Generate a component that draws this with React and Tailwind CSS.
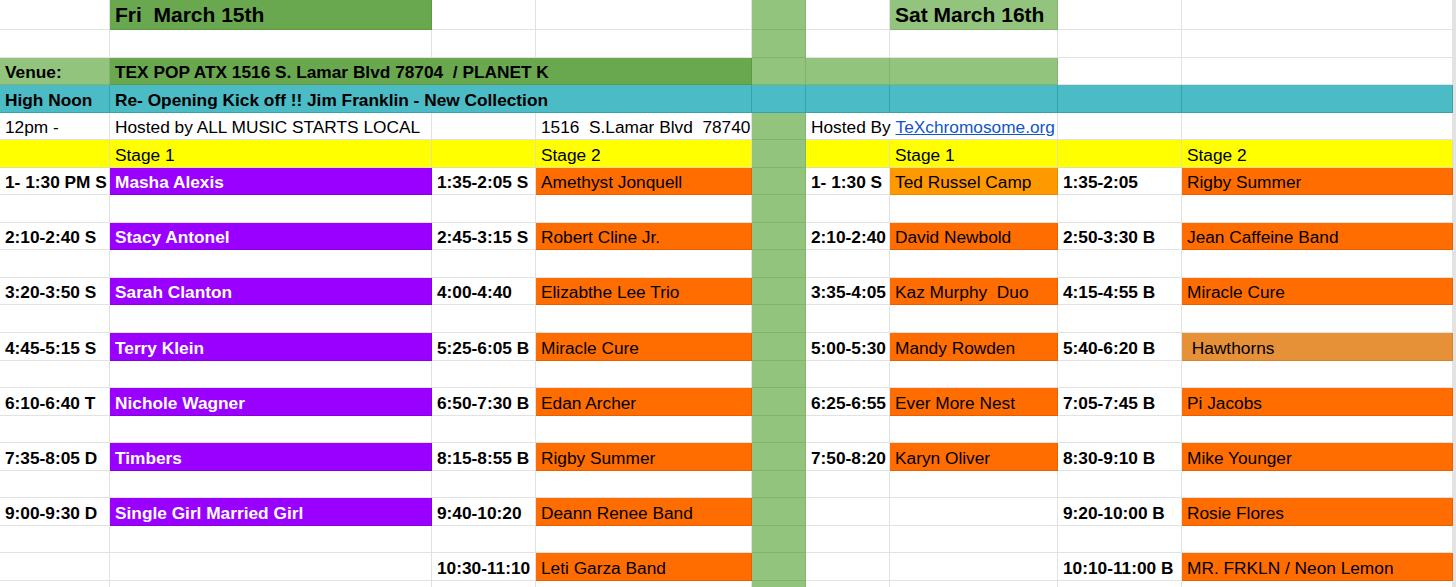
import React from "react";

const DG = "bg-[#6aa84f] border-[#5e9a45]";
const LG = "bg-[#93c47d] border-[#82b46c]";
const TEAL = "bg-[#4bbbc6] border-[#35a2ac]";
const YEL = "bg-[#ffff00] border-[#e0e0a0]";
const PUR = "bg-[#9900ff] border-[#8800e0] text-white font-bold";
const ORG = "bg-[#ff6d01] border-[#e85f00]";
const ORG2 = "bg-[#ff9900] border-[#e88a00]";
const ORG3 = "bg-[#e69138] border-[#d4822b]";

const Cell = ({ span = 1, cls = "", children }) => {
  const spans = { 1: "", 2: "col-span-2", 3: "col-span-3" };
  return (
    <div
      className={`${spans[span]} flex items-end pb-[2px] pl-[5px] pr-[2px] whitespace-pre overflow-hidden border-r border-b ${
        cls.includes("border-[") ? "" : "border-[#e2e2e2]"
      } ${cls}`}
    >
      {children}
    </div>
  );
};

const fri = [
  ["1- 1:30 PM S", "Masha Alexis", "1:35-2:05 S", "Amethyst Jonquell"],
  ["2:10-2:40 S", "Stacy Antonel", "2:45-3:15 S", "Robert Cline Jr."],
  ["3:20-3:50 S", "Sarah Clanton", "4:00-4:40", "Elizabthe Lee Trio"],
  ["4:45-5:15 S", "Terry Klein", "5:25-6:05 B", "Miracle Cure"],
  ["6:10-6:40 T", "Nichole Wagner", "6:50-7:30 B", "Edan Archer"],
  ["7:35-8:05 D", "Timbers", "8:15-8:55 B", "Rigby Summer"],
  ["9:00-9:30 D", "Single Girl Married Girl", "9:40-10:20", "Deann Renee Band"],
  ["", "", "10:30-11:10", "Leti Garza Band"],
];

const sat = [
  ["1- 1:30 S", "Ted Russel Camp", "1:35-2:05", "Rigby Summer"],
  ["2:10-2:40", "David Newbold", "2:50-3:30 B", "Jean Caffeine Band"],
  ["3:35-4:05", "Kaz Murphy  Duo", "4:15-4:55 B", "Miracle Cure"],
  ["5:00-5:30", "Mandy Rowden", "5:40-6:20 B", " Hawthorns"],
  ["6:25-6:55", "Ever More Nest", "7:05-7:45 B", "Pi Jacobs"],
  ["7:50-8:20", "Karyn Oliver", "8:30-9:10 B", "Mike Younger"],
  ["", "", "9:20-10:00 B", "Rosie Flores"],
  ["", "", "10:10-11:00 B", "MR. FRKLN / Neon Lemon"],
];

const Row = ({ first, children }) => (
  <div
    className={`grid grid-cols-[110px_322px_104px_216px_54px_84px_168px_124px_271px_3px] ${
      first ? "h-[30px]" : "h-[27.55px]"
    }`}
  >
    {children}
    <div className="bg-[#e3e3e3]" />
  </div>
);

const EmptyRow = () => (
  <Row>
    <Cell />
    <Cell />
    <Cell />
    <Cell />
    <Cell cls={LG} />
    <Cell />
    <Cell />
    <Cell />
    <Cell />
  </Row>
);

export default function App() {
  return (
    <div className="w-[1456px] h-[587px] overflow-hidden bg-white text-black text-[17.3px] leading-[20px] font-['Liberation_Sans',Arial,sans-serif]">
      <Row first>
        <Cell />
        <Cell cls={`${DG} font-bold text-[21px] leading-[24px]`}>Fri  March 15th</Cell>
        <Cell />
        <Cell />
        <Cell cls={LG} />
        <Cell />
        <Cell cls={`${LG} font-bold text-[21px] leading-[24px]`}>Sat March 16th</Cell>
        <Cell />
        <Cell />
      </Row>
      <EmptyRow />
      <Row>
        <Cell cls={`${LG} font-bold`}>Venue:</Cell>
        <Cell span={3} cls={`${DG} font-bold`}>
          TEX POP ATX 1516 S. Lamar Blvd 78704  / PLANET K
        </Cell>
        <Cell cls={LG} />
        <Cell cls={LG} />
        <Cell cls={LG} />
        <Cell />
        <Cell />
      </Row>
      <Row>
        <Cell cls={`${TEAL} font-bold`}>High Noon</Cell>
        <Cell span={3} cls={`${TEAL} font-bold`}>
          Re- Opening Kick off !! Jim Franklin - New Collection
        </Cell>
        <Cell cls={TEAL} />
        <Cell cls={TEAL} />
        <Cell cls={TEAL} />
        <Cell cls={TEAL} />
        <Cell cls={TEAL} />
      </Row>
      <Row>
        <Cell>12pm -</Cell>
        <Cell>Hosted by ALL MUSIC STARTS LOCAL</Cell>
        <Cell />
        <Cell>1516  S.Lamar Blvd  78740</Cell>
        <Cell cls={LG} />
        <Cell span={2}>
          Hosted By <span className="text-[#1155cc] underline">TeXchromosome.org</span>
        </Cell>
        <Cell />
        <Cell />
      </Row>
      <Row>
        <Cell cls={YEL} />
        <Cell cls={YEL}>Stage 1</Cell>
        <Cell cls={YEL} />
        <Cell cls={YEL}>Stage 2</Cell>
        <Cell cls={LG} />
        <Cell cls={YEL} />
        <Cell cls={YEL}>Stage 1</Cell>
        <Cell cls={YEL} />
        <Cell cls={YEL}>Stage 2</Cell>
      </Row>
      {fri.map((f, i) => {
        const s = sat[i];
        let satBg = s[1] ? ORG : "";
        if (i === 0) satBg = ORG2;
        return (
          <React.Fragment key={i}>
            <Row>
              <Cell cls="font-bold">{f[0]}</Cell>
              <Cell cls={f[1] ? PUR : ""}>{f[1]}</Cell>
              <Cell cls="font-bold">{f[2]}</Cell>
              <Cell cls={ORG}>{f[3]}</Cell>
              <Cell cls={LG} />
              <Cell cls="font-bold">{s[0]}</Cell>
              <Cell cls={satBg}>{s[1]}</Cell>
              <Cell cls="font-bold">{s[2]}</Cell>
              <Cell cls={i === 3 ? ORG3 : ORG}>{s[3]}</Cell>
            </Row>
            <EmptyRow />
          </React.Fragment>
        );
      })}
    </div>
  );
}
